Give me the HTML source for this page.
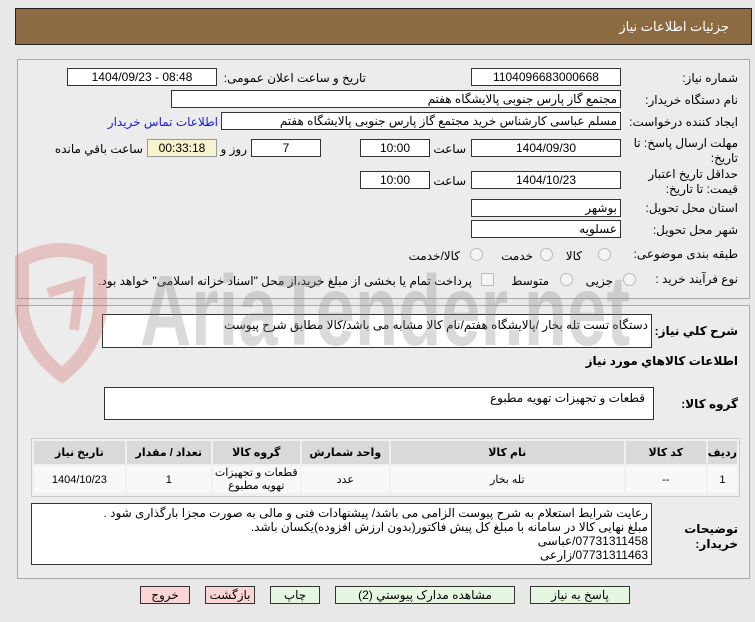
<!DOCTYPE html>
<html><head><meta charset="utf-8"><style>
body{margin:0;width:755px;height:622px;background:#e8e8e8;font-family:"Liberation Sans","DejaVu Sans",sans-serif;font-size:12px;color:#000;position:relative;overflow:hidden}
.a{position:absolute}
.hdr{left:15px;top:8px;width:735px;height:35px;background:#8c6b42;border:1px solid #222}
.hdr span{position:absolute;right:22px;top:10px;color:#fff;font-size:13px}
.panel{left:17px;width:731px;border:1px solid #aaa;background:#ececec}
.box{position:absolute;background:#fff;border:1px solid #333;height:18px;line-height:17px;box-sizing:border-box;padding:0 3px;font-size:12px;white-space:nowrap;overflow:hidden}
.c{text-align:center}.r{text-align:right;direction:rtl}
.lb{position:absolute;direction:rtl;text-align:right;white-space:nowrap;font-size:12px}
.rad{position:absolute;width:11px;height:11px;border-radius:50%;border:1px solid #bbb;background:#f4f4f4}
table{border-collapse:separate;border-spacing:2px;font-size:11px}
th{background:#d9d9d9;height:23px;font-weight:bold;padding:0}
td{background:#f8f8f8;height:27px;text-align:center;padding:0}
.btn{position:absolute;top:586px;height:18px;line-height:17px;text-align:center;border:1px solid #333;box-sizing:border-box;font-size:12px}
.g{background:#e6f7e1}.p{background:#f9d5d5}
</style></head><body>
<div class="a hdr"><span>جزئیات اطلاعات نیاز</span></div>
<div class="a panel" style="top:59px;height:238px"></div>
<div class="a panel" style="top:305px;height:272px"></div>

<div class="lb" style="right:17px;top:71px">شماره نیاز:</div>
<div class="box c" style="left:471px;top:68px;width:150px">1104096683000668</div>
<div class="lb" style="right:389px;top:71px">تاریخ و ساعت اعلان عمومی:</div>
<div class="box c" style="left:67px;top:68px;width:150px">1404/09/23 - 08:48</div>

<div class="lb" style="right:17px;top:93px">نام دستگاه خریدار:</div>
<div class="box r" style="left:171px;top:90px;width:450px">مجتمع گاز پارس جنوبی  پالایشگاه هفتم</div>

<div class="lb" style="right:17px;top:115px">ایجاد کننده درخواست:</div>
<div class="box r" style="left:221px;top:112px;width:400px">مسلم عباسی کارشناس خرید مجتمع گاز پارس جنوبی  پالایشگاه هفتم</div>
<div class="lb" style="right:537px;top:115px;color:#1a1adc">اطلاعات تماس خریدار</div>

<div class="lb" style="right:17px;top:136px;line-height:15px">مهلت ارسال پاسخ: تا<br>تاریخ:</div>
<div class="box c" style="left:471px;top:139px;width:150px">1404/09/30</div>
<div class="lb" style="right:289px;top:142px">ساعت</div>
<div class="box c" style="left:360px;top:139px;width:70px">10:00</div>
<div class="box c" style="left:251px;top:139px;width:70px">7</div>
<div class="lb" style="right:508px;top:142px">روز و</div>
<div class="box c" style="left:147px;top:139px;width:70px;background:#f6f3cf;border-color:#999">00:33:18</div>
<div class="lb" style="right:612px;top:142px">ساعت باقي مانده</div>

<div class="lb" style="right:17px;top:167px;line-height:15px">حداقل تاریخ اعتبار<br>قیمت: تا تاریخ:</div>
<div class="box c" style="left:471px;top:171px;width:150px">1404/10/23</div>
<div class="lb" style="right:289px;top:174px">ساعت</div>
<div class="box c" style="left:360px;top:171px;width:70px">10:00</div>

<div class="lb" style="right:17px;top:201px">استان محل تحویل:</div>
<div class="box r" style="left:471px;top:199px;width:150px">بوشهر</div>
<div class="lb" style="right:17px;top:223px">شهر محل تحویل:</div>
<div class="box r" style="left:471px;top:220px;width:150px">عسلویه</div>

<div class="lb" style="right:17px;top:247px">طبقه بندی موضوعی:</div>
<div class="rad" style="left:598px;top:248px"></div><div class="lb" style="right:173px;top:249px">کالا</div>
<div class="rad" style="left:540px;top:248px"></div><div class="lb" style="right:222px;top:249px">خدمت</div>
<div class="rad" style="left:470px;top:248px"></div><div class="lb" style="right:295px;top:249px">کالا/خدمت</div>

<div class="lb" style="right:17px;top:272px">نوع فرآیند خرید :</div>
<div class="rad" style="left:623px;top:273px"></div><div class="lb" style="right:142px;top:274px">جزیی</div>
<div class="rad" style="left:560px;top:273px"></div><div class="lb" style="right:206px;top:274px">متوسط</div>
<div class="a" style="left:481px;top:273px;width:11px;height:11px;border:1px solid #bbb;background:#f4f4f4"></div>
<div class="lb" style="right:283px;top:274px">پرداخت تمام یا بخشی از مبلغ خرید،از محل "اسناد خزانه اسلامی" خواهد بود.</div>

<div class="lb" style="right:17px;top:324px;font-weight:bold">شرح کلي نیاز:</div>
<div class="box r" style="left:102px;top:314px;width:550px;height:34px;line-height:16px;padding-top:2px">دستگاه تست تله بخار /پالایشگاه هفتم/نام کالا مشابه می باشد/کالا مطابق شرح پیوست</div>
<div class="lb" style="right:17px;top:354px;font-weight:bold">اطلاعات کالاهاي مورد نیاز</div>

<div class="lb" style="right:17px;top:397px;font-weight:bold">گروه کالا:</div>
<div class="box r" style="left:104px;top:387px;width:550px;height:33px;line-height:16px;padding:2px 8px">قطعات و تجهیزات تهویه مطبوع</div>

<div class="a" style="left:31px;top:438px;width:707px;height:57px;border:1px solid #ccc;background:#f0f0f0">
<table style="width:707px;direction:rtl">
<tr><th style="width:28px">ردیف</th><th style="width:80px">کد کالا</th><th style="width:233px">نام کالا</th><th style="width:87px">واحد شمارش</th><th style="width:87px">گروه کالا</th><th style="width:84px">تعداد / مقدار</th><th>تاریخ نیاز</th></tr>
<tr><td>1</td><td>--</td><td>تله بخار</td><td>عدد</td><td style="line-height:13px">قطعات و تجهیزات<br>تهویه مطبوع</td><td>1</td><td>1404/10/23</td></tr>
</table></div>

<div class="lb" style="right:17px;top:522px;font-weight:bold;line-height:15px">توضیحات<br>خریدار:</div>
<div class="box r" style="left:31px;top:503px;width:621px;height:62px;line-height:14px;padding:2px 3px;white-space:normal">رعایت شرایط استعلام به شرح پیوست الزامی می باشد/ پیشنهادات فنی و مالی به صورت مجزا بارگذاری شود .<br>مبلغ نهایی کالا در سامانه با مبلغ کل پیش فاکتور(بدون ارزش افزوده)یکسان باشد.<br>07731311458/عباسی<br>07731311463/زارعی</div>

<div class="btn g" style="left:530px;width:100px">پاسخ به نیاز</div>
<div class="btn g" style="left:335px;width:180px">مشاهده مدارک پیوستي (2)</div>
<div class="btn g" style="left:270px;width:50px">چاپ</div>
<div class="btn p" style="left:205px;width:50px">بازگشت</div>
<div class="btn p" style="left:140px;width:50px">خروج</div>

<svg class="a" style="left:0;top:235px;pointer-events:none" width="660" height="160" viewBox="0 0 660 160">
<g opacity="0.3">
<path d="M22 25 Q60 5 100 25 L100 75 Q95 115 62 140 Q28 115 22 75 Z" fill="none" stroke="#d06060" stroke-width="14"/>
<path d="M48 58 L80 48 L74 95" fill="none" stroke="#d06060" stroke-width="10"/>
<text x="140" y="110" font-family="Liberation Sans" font-weight="bold" font-size="100" fill="#888" textLength="490" lengthAdjust="spacingAndGlyphs">AriaTender.net</text>
</g>
</svg>
</body></html>
